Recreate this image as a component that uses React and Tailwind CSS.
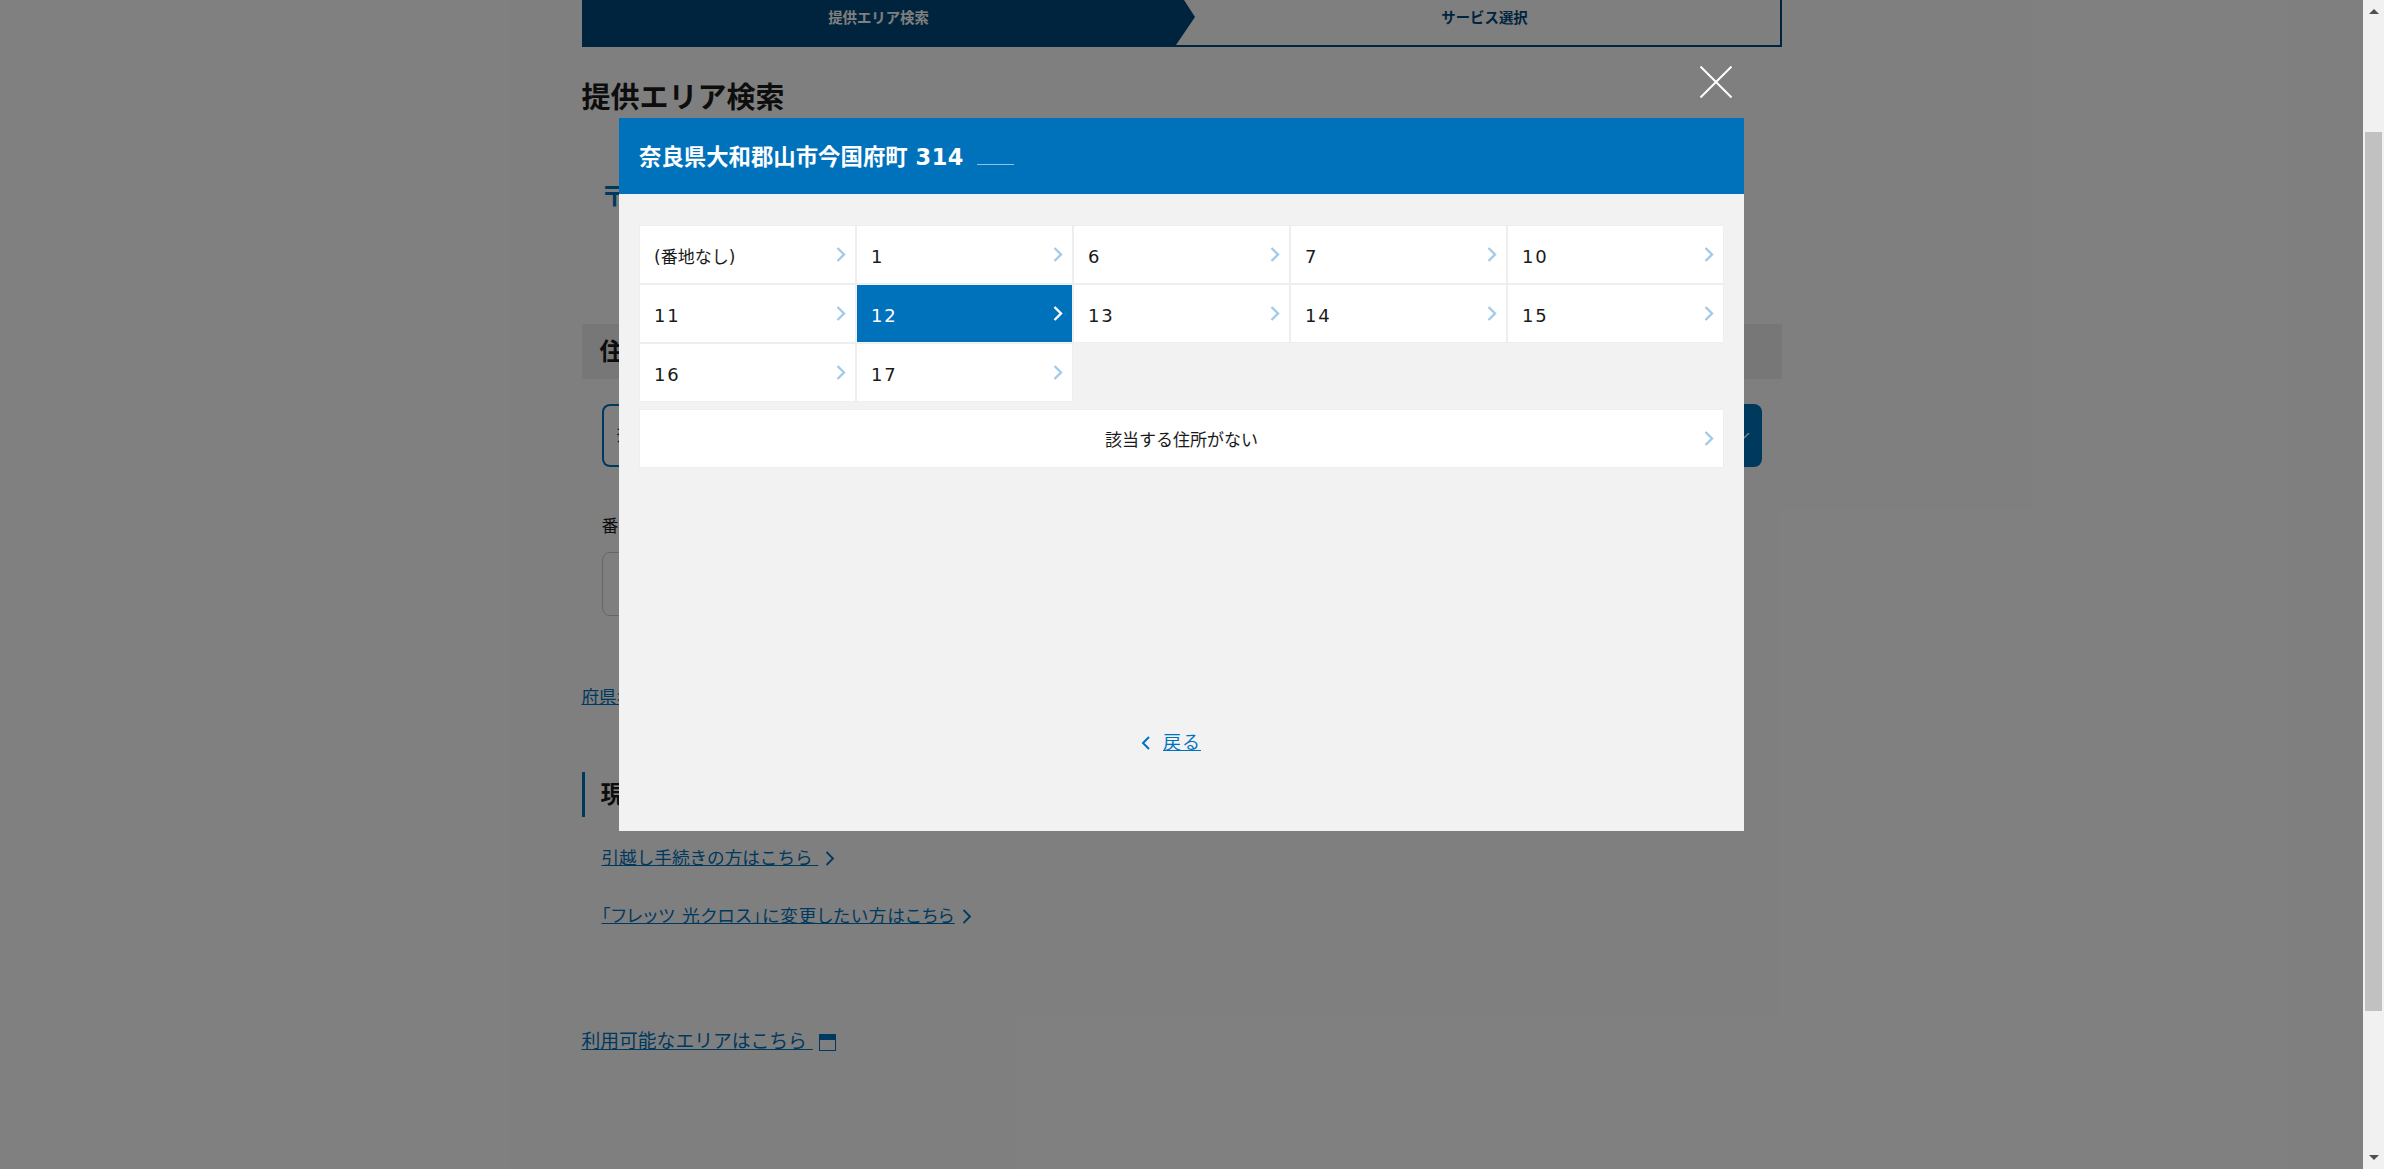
import React from 'react';

const jp = "font-['DejaVu_Sans','Noto_Sans_CJK_JP',sans-serif]";

const blocks = ['(番地なし)', '1', '6', '7', '10', '11', '12', '13', '14', '15', '16', '17'];

const Chevron = ({ className = '' }) => (
  <svg width="10" height="15" viewBox="0 0 10 15" fill="none" className={className}>
    <path d="M1.5 1 L8 7.5 L1.5 14" stroke="currentColor" strokeWidth="2.4" />
  </svg>
);

const LinkChevron = ({ className = '' }) => (
  <svg width="10" height="15" viewBox="0 0 10 15" fill="none" className={className}>
    <path d="M1.5 1 L8 7.5 L1.5 14" stroke="currentColor" strokeWidth="1.8" />
  </svg>
);

const WindowIcon = () => (
  <svg width="17" height="17" viewBox="0 0 17 17" fill="none" className="ml-[6px]">
    <rect x="0.5" y="0.5" width="16" height="16" stroke="#0072bc" />
    <rect x="0" y="0" width="17" height="6" fill="#0072bc" />
  </svg>
);

const Page = () => (
  <div className="w-[1200px] mx-auto text-[#1a1a1a] text-[17px]">
    {/* stepper, page is scrolled so its top is cut off */}
    <div className="flex h-[47px] border-b-2 border-r-2 border-[#00487a] relative">
      <div className="w-[594px] bg-[#00487a] text-white text-[14.4px] font-bold flex justify-center pt-[8px] leading-[20px]">
        提供エリア検索
      </div>
      <svg width="20" height="45" viewBox="0 0 20 45" className="shrink-0">
        <polygon points="0,0 8,0 19,17 0,45" fill="#00487a" />
      </svg>
      <div className="flex-1 text-[#00487a] text-[14.4px] font-bold flex justify-center pt-[8px] pr-[6px] leading-[20px]">
        サービス選択
      </div>
    </div>

    <h1 className="text-[29px] font-bold leading-[40px] mt-[31px]">提供エリア検索</h1>

    <div className="mt-[62px] ml-[19px] text-[28px] font-bold leading-[36px] text-[#0072bc]">〒</div>

    <div className="mt-[108px] h-[55px] bg-[#eeeeee] pl-[18px] text-[24px] font-bold flex items-center">
      住所を入力してください
    </div>

    <div className="mx-[20px] mt-[25px] h-[63px] flex">
      <div className="flex-1 border-2 border-r-0 border-[#0072bc] rounded-l-[8px] pl-[13px] flex items-center">
        奈良県大和郡山市今国府町
      </div>
      <div className="w-[160px] bg-[#0072bc] rounded-r-[8px] flex items-center justify-end pr-[12px] text-white">
        <svg width="6" height="6" viewBox="0 0 6 6" fill="none">
          <path d="M0 5 L5 0" stroke="currentColor" strokeWidth="1.5" />
        </svg>
      </div>
    </div>

    <div className="mx-[20px] mt-[47px] leading-[24px]">番地・号</div>
    <div className="mx-[20px] mt-[14px] w-[500px] h-[64px] border border-[#cccccc] rounded-[8px]" />

    <a className="block mt-[69px] leading-[24px] underline text-[#0072bc] w-fit text-[17.6px]">府県名から検索する</a>

    <div className="mt-[63px] border-l-[3px] border-[#0072bc] h-[45px] pl-[16px] text-[24px] font-bold flex items-center">
      現在ご利用中の方
    </div>

    <div className="ml-[20px] mt-[29px] flex items-center text-[#0072bc] leading-[24px] text-[17.6px]">
      <a className="underline whitespace-pre">引越し手続きの方はこちら </a>
      <LinkChevron className="ml-[7px]" />
    </div>
    <div className="ml-[20px] mt-[34px] flex items-center text-[#0072bc] leading-[24px] text-[17.6px] [font-feature-settings:'palt']">
      <a className="underline tracking-[1px]">「フレッツ 光クロス」に変更したい方はこちら</a>
      <LinkChevron className="ml-[7px]" />
    </div>

    <div className="mt-[102px] flex items-center text-[#0072bc] leading-[24px] text-[18.8px]">
      <a className="underline whitespace-pre">利用可能なエリアはこちら </a>
      <WindowIcon />
    </div>
  </div>
);

const AddressCell = ({ label, active }) => (
  <button
    className={`h-[57px] flex items-center justify-between pl-[14px] pr-[9px] text-left ${
      active ? 'bg-[#0072bc] text-white' : 'bg-white text-[#1a1a1a] outline outline-1 outline-[#eeeeee]'
    }`}
  >
    {/* the block numbers sit wider than the kana label */}
    <span className={`pt-[5px] leading-[24px] ${label === '(番地なし)' ? '' : 'text-[18px] tracking-[1.9px]'}`}>{label}</span>
    <Chevron className={active ? 'text-white mb-[1px]' : 'text-[#a3cbe9] mb-[1px]'} />
  </button>
);

const Modal = () => (
  <div className="w-[1125px] h-[713px] bg-[#f2f2f2] flex flex-col relative">
    <button className="absolute right-[12px] -top-[52px] text-white">
      <svg width="32" height="32" viewBox="0 0 32 32" fill="none" className="block">
        <path d="M0.5 0.5 L31.5 31.5 M31.5 0.5 L0.5 31.5" stroke="currentColor" strokeWidth="2" />
      </svg>
    </button>

    <div className="h-[76px] shrink-0 bg-[#0072bc] text-white text-[22.4px] font-bold pl-[20px] pt-[3px] flex items-center whitespace-pre">
      <span>奈良県大和郡山市今国府町 <span className="tracking-[0.6px]">314</span></span>
      <span className="ml-[13px] mt-[14px] w-[37px] h-px bg-[#8fc3e6]" />
    </div>

    <div className="px-[21px] pt-[32px] text-[17px]">
      <div className="grid grid-cols-[repeat(5,215px)] gap-[2px]">
        {blocks.map((b) => (
          <AddressCell key={b} label={b} active={b === '12'} />
        ))}
      </div>
      <button className="mt-[9px] w-[1083px] h-[57px] bg-white outline outline-1 outline-[#eeeeee] flex items-center pl-[14px] pr-[9px] text-[#1a1a1a]">
        <span className="flex-1 text-center leading-[24px] pl-[5px] pt-[2px]">該当する住所がない</span>
        <Chevron className="text-[#a3cbe9] mb-[1px]" />
      </button>
    </div>

    <div className="mt-[264px] ml-[522px] flex items-center text-[#0072bc] text-[18px] leading-[24px]">
      <svg width="10" height="14" viewBox="0 0 10 14" fill="none">
        <path d="M8 1 L2 7 L8 13" stroke="currentColor" strokeWidth="2" />
      </svg>
      <a className="ml-[12px] underline tracking-[1px]">戻る</a>
    </div>
  </div>
);

const Scrollbar = () => (
  <div className="w-[21px] shrink-0 bg-[#f1f1f1] flex flex-col items-center">
    <svg width="10" height="5" viewBox="0 0 10 5" className="mt-[9px]">
      <polygon points="5,0 10,5 0,5" fill="#505050" />
    </svg>
    <div className="mt-[118px] w-[17px] h-[879px] bg-[#c1c1c1]" />
    <svg width="10" height="5" viewBox="0 0 10 5" className="mt-auto mb-[9px]">
      <polygon points="0,0 10,0 5,5" fill="#505050" />
    </svg>
  </div>
);

export default function App() {
  return (
    <div className={`flex h-[1169px] overflow-hidden bg-white ${jp}`}>
      <div className="flex-1 relative overflow-hidden">
        <Page />
        {/* dimmed backdrop + dialog */}
        <div className="absolute inset-0 bg-black/50 flex justify-center pt-[118px]">
          <Modal />
        </div>
      </div>
      <Scrollbar />
    </div>
  );
}
